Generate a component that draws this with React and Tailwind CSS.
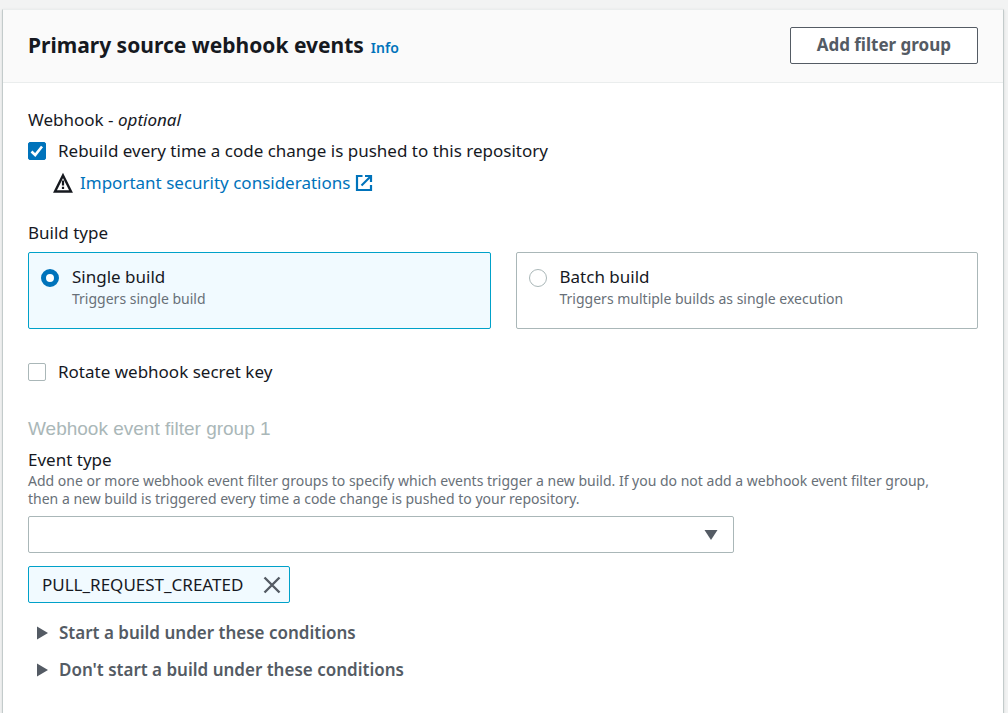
import { useState } from "react";

function Checkbox({ id, label, defaultChecked }) {
  return (
    <label htmlFor={id} className="flex items-center gap-3">
      <span className="grid size-[18px] shrink-0">
        <input
          id={id}
          type="checkbox"
          defaultChecked={defaultChecked}
          className="peer col-start-1 row-start-1 size-[18px] appearance-none rounded-xs border border-[#aab7b8] bg-white checked:border-[#0073bb] checked:bg-[#0073bb]"
        />
        <svg
          viewBox="0 0 18 18"
          className="pointer-events-none invisible col-start-1 row-start-1 size-[18px] peer-checked:visible"
          aria-hidden="true"
        >
          <path d="M3.5 9.500 7.200 13 14 4.500" fill="none" stroke="#fff" strokeWidth="2.600" />
        </svg>
      </span>
      <span>{label}</span>
    </label>
  );
}

function BuildTile({ value, title, description, selected, onSelect }) {
  return (
    <label
      className={
        "flex flex-1 items-start gap-[13px] rounded-xs border px-3 pt-3 pb-[19px] " +
        (selected ? "border-[#00a1c9] bg-[#f1faff]" : "border-[#aab7b8] bg-white")
      }
    >
      <input
        type="radio"
        name="build-type"
        value={value}
        checked={selected}
        onChange={onSelect}
        className="mt-1 size-[18px] shrink-0 appearance-none rounded-full border border-[#aab7b8] bg-white checked:border-[5px] checked:border-[#0073bb]"
      />
      <span className="flex flex-col">
        <span className="leading-6">{title}</span>
        <span className="text-[14px] leading-5 text-[#687078]">{description}</span>
      </span>
    </label>
  );
}

function Expander({ children }) {
  return (
    <button type="button" className="flex items-center gap-[11px] pl-[9px] font-semibold text-[#545b64]">
      <svg viewBox="0 0 11 14" className="h-[14px] w-[11px]" aria-hidden="true">
        <path d="M0 .5v13L11 7z" fill="#545b64" />
      </svg>
      {children}
    </button>
  );
}

export default function App() {
  const [build, setBuild] = useState("single");

  return (
    <div className="flex min-h-screen flex-col bg-[#f2f3f3] pt-[9px] pr-1 pl-[2px] font-['Noto_Sans','Open_Sans',sans-serif] text-[17px] leading-6 text-[#16191f]">
      <section className="grow border-x border-t border-x-[#c3cbcb] border-t-[#eaeded] bg-white shadow-sm">
        <header className="flex items-center justify-between border-b border-[#eaeded] bg-[#fafafa] px-[25px] pt-[17px] pb-[18px]">
          <div className="flex items-baseline gap-[7px]">
            <h2 className="text-[21px] leading-7 font-bold">Primary source webhook events</h2>
            <a href="#info" className="text-[14px] font-semibold text-[#0073bb]">
              Info
            </a>
          </div>
          <button
            type="button"
            className="h-[37px] rounded-xs border border-[#545b64] bg-white px-[26px] pb-[2px] font-bold text-[#545b64]"
          >
            Add filter group
          </button>
        </header>

        <div className="flex flex-col px-[25px] pt-[25px]">
          <div>
            Webhook - <i>optional</i>
          </div>
          <div className="mt-[7px]">
            <Checkbox id="rebuild" label="Rebuild every time a code change is pushed to this repository" defaultChecked />
          </div>
          <div className="mt-2 flex items-center pl-6">
            <svg viewBox="0 0 22 22" className="mr-[6px] size-[22px]" aria-hidden="true">
              <path d="M11 3.500 19 19.500H3z" fill="none" stroke="#16191f" strokeWidth="2.400" />
              <path d="M11 8.500v5M11 14.800v2.200" stroke="#16191f" strokeWidth="2.200" />
            </svg>
            <a href="#security" className="flex items-center gap-[5px] text-[#0073bb]">
              Important security considerations
              <svg viewBox="0 0 18 18" className="size-[18px]" aria-hidden="true">
                <g fill="none" stroke="#0073bb" strokeWidth="2.200">
                  <path d="M7.500 2H2v14h14v-5" />
                  <path d="M10 2h6v6" />
                  <path d="M15.500 2.500 6.500 11.500" />
                </g>
              </svg>
            </a>
          </div>

          <fieldset className="mt-[26px]">
            <legend>Build type</legend>
            <div className="mt-[7px] flex gap-[25px]">
              <BuildTile
                value="single"
                title="Single build"
                description="Triggers single build"
                selected={build === "single"}
                onSelect={() => setBuild("single")}
              />
              <BuildTile
                value="batch"
                title="Batch build"
                description="Triggers multiple builds as single execution"
                selected={build === "batch"}
                onSelect={() => setBuild("batch")}
              />
            </div>
          </fieldset>

          <div className="mt-[31px]">
            <Checkbox id="rotate" label="Rotate webhook secret key" />
          </div>

          <h3 className="mt-[33px] font-['Liberation_Sans',Arial,sans-serif] text-[19px] text-[#aab7b8]">
            Webhook event filter group 1
          </h3>

          <label htmlFor="event-type" className="mt-[7px]">
            Event type
          </label>
          <p className="pr-6 text-[14px] leading-[18px] text-[#687078]">
            Add one or more webhook event filter groups to specify which events trigger a new build. If you do not add a
            webhook event filter group, then a new build is triggered every time a code change is pushed to your
            repository.
          </p>
          <div className="mt-2 grid w-3/4 pr-[7px]">
            <select
              id="event-type"
              defaultValue=""
              className="col-start-1 row-start-1 h-[37px] w-full appearance-none rounded-xs border border-[#aab7b8] bg-white px-3"
            >
              <option value="" />
            </select>
            <svg
              viewBox="0 0 14 12"
              className="pointer-events-none col-start-1 row-start-1 mr-4 h-3 w-[14px] self-center justify-self-end"
              aria-hidden="true"
            >
              <path d="M.5 1h13L7 11z" fill="#545b64" />
            </svg>
          </div>

          <div className="mt-[13px] flex h-[37px] items-center gap-5 self-start rounded-xs border border-[#00a1c9] bg-[#f1faff] pr-2 pl-[13px]">
            <span>PULL_REQUEST_CREATED</span>
            <button type="button" aria-label="Remove PULL_REQUEST_CREATED">
              <svg viewBox="0 0 18 18" className="size-[18px]" aria-hidden="true">
                <path d="m1.500 1.500 15 15M16.500 1.500l-15 15" stroke="#545b64" strokeWidth="2.400" />
              </svg>
            </button>
          </div>

          <div className="mt-[18px] flex flex-col items-start gap-[13px] pb-8">
            <Expander>Start a build under these conditions</Expander>
            <Expander>Don't start a build under these conditions</Expander>
          </div>
        </div>
      </section>
    </div>
  );
}
